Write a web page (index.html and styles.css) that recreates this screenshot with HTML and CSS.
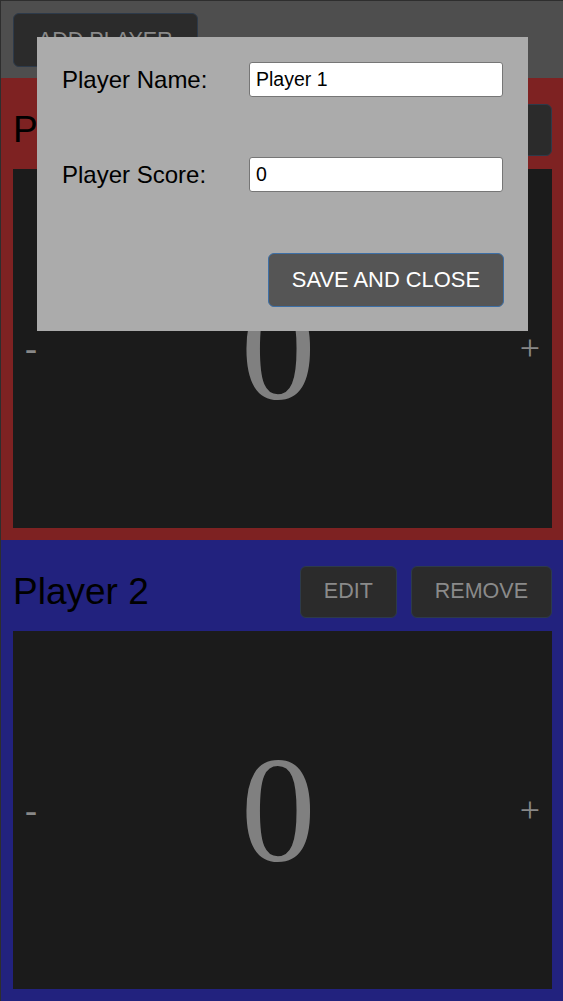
FILE: index.html
```html
<!DOCTYPE html>
<html lang="en">
<head>
<meta charset="utf-8">
<title>Scoreboard</title>
<link rel="stylesheet" href="styles.css">
</head>
<body>
  <header class="topbar">
    <button class="dark-btn">ADD PLAYER</button>
  </header>

  <section class="player player-red">
    <div class="player-head">
      <h2 class="player-name">Player 1</h2>
      <button class="dark-btn">EDIT</button>
      <button class="dark-btn">REMOVE</button>
    </div>
    <div class="score-box">
      <span class="step">-</span>
      <span class="score">0</span>
      <span class="step">+</span>
    </div>
  </section>

  <section class="player player-blue">
    <div class="player-head">
      <h2 class="player-name">Player 2</h2>
      <button class="dark-btn">EDIT</button>
      <button class="dark-btn">REMOVE</button>
    </div>
    <div class="score-box">
      <span class="step">-</span>
      <span class="score">0</span>
      <span class="step">+</span>
    </div>
  </section>

  <div class="modal">
    <form class="modal-form">
      <label class="modal-label" for="pname">Player Name:</label>
      <input class="modal-input" id="pname" type="text" value="Player 1">
      <label class="modal-label" for="pscore">Player Score:</label>
      <input class="modal-input" id="pscore" type="text" value="0">
      <div class="modal-actions">
        <button type="button" class="save-btn">SAVE AND CLOSE</button>
      </div>
    </form>
  </div>
</body>
</html>
```

FILE: styles.css
```css
* {
  box-sizing: border-box;
}

html, body {
  margin: 0;
  padding: 0;
}

body {
  height: 100vh;
  display: flex;
  flex-direction: column;
  border-top: 1px solid #2e2e2e;
  border-left: 1px solid #2e2e2e;
  font-family: "Liberation Sans", Arial, sans-serif;
  background: #1b1b1b;
  position: relative;
}

.topbar {
  background: #4e4e4e;
  padding: 12px 12px 11px 12px;
  display: flex;
}

.dark-btn {
  height: 54px;
  padding: 0 24px;
  background: #2b2b2b;
  border: 1px solid #2d3a4a;
  border-radius: 6px;
  color: #8a8a8a;
  font-family: "Liberation Sans", Arial, sans-serif;
  font-size: 21.5px;
}

.player {
  flex: 1;
  display: flex;
  flex-direction: column;
  padding: 13px 11px 12px 12px;
}

.player-red {
  background: #7e2222;
}

.player-blue {
  background: #22227e;
}

.player-head {
  height: 78px;
  display: flex;
  align-items: center;
  gap: 14px;
}

.player-head .dark-btn {
  height: 52px;
  padding: 0 23px;
}

.player-name {
  flex: 1;
  margin: 0;
  font-size: 37px;
  font-weight: normal;
  color: #000;
}

.score-box {
  flex: 1;
  background: #1b1b1b;
  display: flex;
  align-items: center;
  padding: 0 12px;
}

.step {
  font-family: "Liberation Serif", "Times New Roman", serif;
  font-size: 36px;
  color: #888;
}

.score {
  flex: 1;
  text-align: center;
  font-family: "Liberation Serif", "Times New Roman", serif;
  font-size: 150px;
  color: #808080;
}

.modal {
  position: absolute;
  top: 36px;
  left: 36px;
  width: 491px;
  height: 294px;
  background: #ababab;
  padding: 25px 24px 24px 25px;
}

.modal-form {
  display: grid;
  grid-template-columns: 187px 254px;
  grid-template-rows: 35px 35px 54px;
  row-gap: 60px;
  align-items: center;
}

.modal-label {
  font-size: 24px;
  color: #000;
}

.modal-input {
  width: 254px;
  height: 35px;
  border: 1px solid #767676;
  border-radius: 3px;
  padding: 0 6px;
  font-family: "Liberation Sans", Arial, sans-serif;
  font-size: 19.5px;
  color: #000;
  background: #fff;
}

.modal-actions {
  grid-column: 1 / 3;
  display: flex;
  justify-content: flex-end;
  margin-top: 1px;
}

.save-btn {
  height: 54px;
  padding: 0 23px;
  background: #555555;
  border: 1px solid #3d6fa6;
  border-radius: 6px;
  color: #fff;
  font-family: "Liberation Sans", Arial, sans-serif;
  font-size: 21.9px;
  margin-right: -1px;
}
```
